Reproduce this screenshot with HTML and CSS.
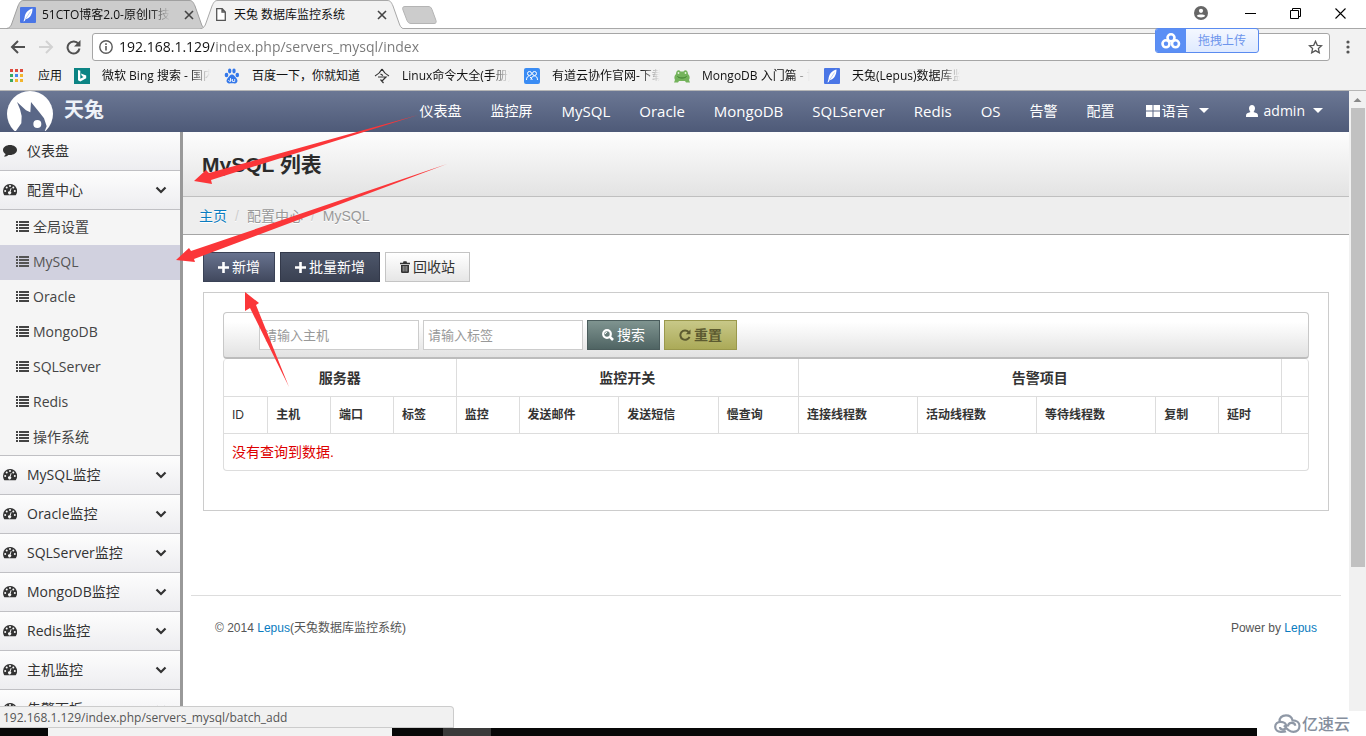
FILE: index.html
```html
<!DOCTYPE html>
<html lang="zh-CN">
<head>
<meta charset="utf-8">
<title>天兔 数据库监控系统</title>
<link rel="stylesheet" href="styles.css">
</head>
<body>
<svg class="sprite" aria-hidden="true">
  <symbol id="i-feather" viewBox="0 0 16 16"><rect width="16" height="16" rx="1" fill="#4a76e6"/><path d="M12.500 1.500C8 2.500 5 6 4.500 11L3.500 14.500l1.200-.6.800-1.700C10 11.500 12.500 7 12.500 1.500z" fill="#fff"/><path d="M10.500 4.500L5.500 12" stroke="#9db7f4" stroke-width=".7"/></symbol>
  <symbol id="i-x" viewBox="0 0 10 10"><path d="M1 1l8 8M9 1L1 9" stroke="currentColor" stroke-width="1.600" fill="none"/></symbol>
  <symbol id="i-list" viewBox="0 0 13 11"><path d="M0 1h2M0 4h2M0 7h2M0 10h2M3 1h10M3 4h10M3 7h10M3 10h10" stroke="currentColor" stroke-width="2" fill="none"/></symbol>
  <symbol id="i-dash" viewBox="0 0 14 12"><path d="M7 0a7 7 0 0 0-7 7c0 1.500.4 2.800 1.100 3.900.2.300.4.400.7.400h10.400c.3 0 .5-.1.700-.4A7 7 0 0 0 7 0z" fill="currentColor"/><g fill="#fafafa"><circle cx="2.200" cy="7" r="1"/><circle cx="3.700" cy="3.600" r="1"/><circle cx="7" cy="2.100" r="1"/><circle cx="10.300" cy="3.600" r="1"/><circle cx="11.800" cy="7" r="1"/><path d="M8.600 4.200L7.600 7.500a1.600 1.600 0 1 1-1-.3l1.200-3.300z"/></g></symbol>
  <symbol id="i-chev" viewBox="0 0 12 8"><path d="M1.500 1.500L6 6l4.500-4.500" stroke="currentColor" stroke-width="2.200" fill="none"/></symbol>
  <symbol id="i-comment" viewBox="0 0 14 12"><path d="M7 0C3.100 0 0 2.200 0 5c0 1.600 1 3 2.600 3.900-.2.800-.7 1.600-1.500 2.200-.2.200-.1.500.2.500 1.600-.1 3-.8 4-1.700.5.100 1.100.1 1.700.1 3.900 0 7-2.200 7-5S10.900 0 7 0z" fill="currentColor"/></symbol>
  <symbol id="i-plus" viewBox="0 0 11 11"><path d="M4.200 0h2.600v4.200H11v2.600H6.800V11H4.200V6.800H0V4.200h4.200z" fill="currentColor"/></symbol>
  <symbol id="i-trash" viewBox="0 0 10 12"><path d="M0 1.700h3L3.500.3h3L7 1.700h3v1.600H0z M1 4h8v6.500c0 .8-.5 1.500-1.200 1.500H2.200C1.500 12 1 11.300 1 10.500z" fill="currentColor"/><path d="M3.200 5v5.500M5 5v5.500M6.800 5v5.500" stroke="#f3f3f3" stroke-width=".6"/></symbol>
  <symbol id="i-search" viewBox="0 0 12 12"><circle cx="5" cy="5" r="3.800" stroke="currentColor" stroke-width="2.200" fill="none"/><path d="M7.700 7.700L11 11" stroke="currentColor" stroke-width="2.600"/><path d="M5 3.200A1.800 1.800 0 0 0 3.300 5" stroke="currentColor" fill="none"/></symbol>
  <symbol id="i-refresh" viewBox="0 0 12 12"><path d="M9.600 3A4.700 4.700 0 1 0 10.500 7.800" stroke="currentColor" stroke-width="2" fill="none"/><path d="M11.500.5v4.700H6.800z" fill="currentColor"/></symbol>
  <symbol id="i-win" viewBox="0 0 14 12"><path d="M0 0h6.500v5.500H0zM7.500 0H14v5.500H7.500zM0 6.500h6.500V12H0zM7.500 6.500H14V12H7.500z" fill="currentColor"/></symbol>
  <symbol id="i-user" viewBox="0 0 12 12"><path d="M6 0C4.200 0 3 1.300 3 3.300 3 5 4 6.500 4.500 7L1.200 8.200C.4 8.600 0 9.300 0 12h12c0-2.700-.4-3.400-1.200-3.800L7.500 7C8 6.500 9 5 9 3.300 9 1.300 7.800 0 6 0z" fill="currentColor"/></symbol>
</svg>

<div class="window">
  <header class="chrome">
    <div class="tabstrip">
      <div class="tab tab-back">
        <svg class="tab-shape" viewBox="0 0 200 29" preserveAspectRatio="none"><path d="M.5 28.500C4 28 5 26 6 23L12 6C14 1.500 15 .5 18 .5h165c3 0 4 1 6 5.500l6 17c1 3 2 5 4.500 5.500" fill="#ccc" stroke="#a0a0a0"/></svg>
        <svg class="ic16"><use href="#i-feather"/></svg>
        <span class="tab-title fade">51CTO博客2.0-原创IT技术</span>
        <button class="bare" aria-label="关闭标签页"><svg class="ic10"><use href="#i-x"/></svg></button>
      </div>
      <div class="tab tab-front">
        <svg class="tab-shape" viewBox="0 0 204 29" preserveAspectRatio="none"><path d="M0 29C4 28 5 26 6 23L12 6C14 1.500 15 .5 18 .5h169c3 0 4 1 6 5.500l6 17c1 3 2 5 5 6" fill="#f2f2f2" stroke="#a8a8a8"/></svg>
        <svg class="ic-page" viewBox="0 0 10 13"><path d="M.7.700h5.500l3.100 3.200v8.400H.7z M6 .7V4h3.300" fill="#fff" stroke="#555" stroke-width="1.300"/></svg>
        <span class="tab-title">天兔 数据库监控系统</span>
        <button class="bare" aria-label="关闭标签页"><svg class="ic10"><use href="#i-x"/></svg></button>
      </div>
      <button class="bare newtab" aria-label="新标签页"><svg viewBox="0 0 36 18" width="36" height="18"><path d="M4 .5h23c2 0 3 .5 4 3l4 11c.5 2 0 3-2 3H10c-2 0-3-1-4-3L2 4C1 1.500 2 .5 4 .5z" fill="#ccc" stroke="#b4b4b4"/></svg></button>
      <div class="wincontrols">
        <button class="bare account" aria-label="用户"><svg width="14" height="14" viewBox="0 0 14 14"><circle cx="7" cy="7" r="7" fill="#666"/><circle cx="7" cy="4.800" r="2.100" fill="#fff"/><path d="M2.800 9.800C4 8 10 8 11.200 9.800 10 12 4 12 2.800 9.800z" fill="#fff"/></svg></button>
        <button class="bare" aria-label="最小化"><svg width="11" height="11"><path d="M0 5.500h11" stroke="#000"/></svg></button>
        <button class="bare" aria-label="还原"><svg width="11" height="11"><path d="M.5 2.500h8v8h-8zM2.500 2.500v-2h8v8h-2" fill="none" stroke="#000"/></svg></button>
        <button class="bare" aria-label="关闭"><svg width="11" height="11"><path d="M.5.500l10 10M10.500.5l-10 10" stroke="#000" stroke-width="1.100"/></svg></button>
      </div>
    </div>
    <div class="toolbar">
      <button class="bare" aria-label="后退"><svg width="16" height="14" viewBox="0 0 16 14"><path d="M15 7H2M8 1L2 7l6 6" fill="none" stroke="#505050" stroke-width="2"/></svg></button>
      <button class="bare" aria-label="前进"><svg width="16" height="14" viewBox="0 0 16 14"><path d="M1 7h13M8 1l6 6-6 6" fill="none" stroke="#d2d2d2" stroke-width="2"/></svg></button>
      <button class="bare" aria-label="刷新"><svg width="15" height="15" viewBox="0 0 15 15"><path d="M12.500 4A6 6 0 1 0 13.500 8.500" fill="none" stroke="#505050" stroke-width="2"/><path d="M14.500 0v6.500H8z" fill="#505050"/></svg></button>
      <div class="omnibox">
        <svg width="14" height="14" viewBox="0 0 14 14"><circle cx="7" cy="7" r="6.200" fill="none" stroke="#5a5a5a" stroke-width="1.400"/><path d="M7 6v4.500M7 3.300v1.600" stroke="#5a5a5a" stroke-width="1.600"/></svg>
        <input class="url" type="text" aria-label="地址" value="192.168.1.129/index.php/servers_mysql/index">
        <button class="bare" aria-label="收藏"><svg width="15" height="14" viewBox="0 0 15 14"><path d="M7.500 1.300l1.800 4 4.300.4-3.200 2.900.9 4.200-3.800-2.200-3.800 2.200.9-4.200L1.400 5.700l4.300-.4z" fill="none" stroke="#555" stroke-width="1.300"/></svg></button>
      </div>
      <button class="bare menu-dots" aria-label="菜单"><svg width="4" height="14" fill="#555"><circle cx="2" cy="2" r="1.600"/><circle cx="2" cy="7" r="1.600"/><circle cx="2" cy="12" r="1.600"/></svg></button>
    </div>
    <nav class="bookmarks" aria-label="书签栏">
      <a class="apps" href="#"><svg width="14" height="14"><g fill="#dd4b3e"><path d="M0 0h3v3H0zM5 0h3v3H5zM10 0h3v3h-3z"/></g><path d="M0 5h3v3H0z" fill="#38a862"/><path d="M5 5h3v3H5z" fill="#4586f0"/><path d="M10 5h3v3h-3zM5 10h3v3H5zM10 10h3v3h-3z" fill="#f2b52c"/><path d="M0 10h3v3H0z" fill="#38a862"/></svg>应用</a>
      <a class="mark" href="#"><svg class="ic16" viewBox="0 0 16 16"><path d="M0 0h16v16H0z" fill="#0c8484"/><path d="M4 2l2.300.8v7.900l3.200-1.800-1.600-.8-1-2.500 5.300 1.900v2.700L6.300 13.600 4 12.300z" fill="#fff"/></svg><span class="fade">微软 Bing 搜索 - 国内版</span></a>
      <a class="mark" href="#"><svg class="ic16" viewBox="0 0 16 16" fill="#3478ea"><ellipse cx="2.500" cy="7" rx="1.800" ry="2.300"/><ellipse cx="5.700" cy="3" rx="1.700" ry="2.400"/><ellipse cx="10" cy="3" rx="1.700" ry="2.400"/><ellipse cx="13.300" cy="7" rx="1.800" ry="2.300"/><path d="M8 6.500c2 0 2.800 2 4 3.200 1.500 1.500 2 3.300.8 4.800-1.300 1.500-3 .8-4.800.8s-3.500.7-4.800-.8c-1.200-1.500-.7-3.300.8-4.800C5.200 8.500 6 6.500 8 6.500z"/><path d="M6.500 10v3.500M4.700 12a1.200 1.200 0 1 0 1.800-.8M8.500 11v2.500h2.200V11" fill="none" stroke="#fff" stroke-width=".8"/></svg><span>百度一下，你就知道</span></a>
      <a class="mark" href="#"><svg class="ic16" viewBox="0 0 16 16" fill="none" stroke="#333" stroke-width="1.200"><path d="M8 1C6.500 4 4 6.500 1 8M8 1c1.500 3 4 5.500 7 7M6.500 6l2.500 1.500M4 9h8l-4 4M6.500 11.500l3 3.500"/></svg><span class="fade">Linux命令大全(手册)</span></a>
      <a class="mark" href="#"><svg class="ic16" viewBox="0 0 16 16"><rect width="16" height="16" rx="2" fill="#3a8cf4"/><g fill="none" stroke="#fff"><circle cx="5.500" cy="5.500" r="2"/><circle cx="10.500" cy="5.500" r="2"/><path d="M2.500 12c0-3 1.500-4 3-4M7 12c0-3 2-4 3.500-4s3 1 3 4M6 9l2.500 2.500"/></g></svg><span class="fade">有道云协作官网-下载安装</span></a>
      <a class="mark" href="#"><svg class="ic16" viewBox="0 0 16 16"><path d="M2 6C2 2 5 1 6.500 3.500h3C11 1 14 2 14 6c2 2 2 4 1 6l1 2.500h-4l-1-1.500H5l-1 1.500H0L1 12C0 10 0 8 2 6z" fill="#74b35c"/><path d="M3.500 8.500c2 2 7 2 9 0" fill="none" stroke="#3b7d2d"/><circle cx="4.500" cy="5" r=".9" fill="#e8f6df"/><circle cx="11.500" cy="5" r=".9" fill="#e8f6df"/></svg><span class="fade">MongoDB 入门篇 - 博客</span></a>
      <a class="mark" href="#"><svg class="ic16"><use href="#i-feather"/></svg><span class="fade">天兔(Lepus)数据库监控</span></a>
    </nav>
    <button class="upload"><span class="upload-logo"><svg width="20" height="16" viewBox="0 0 20 16" fill="none" stroke="#fff" stroke-width="2.600"><circle cx="10" cy="4.800" r="3.500"/><circle cx="5" cy="10.800" r="3.500"/><circle cx="14.500" cy="10.800" r="3.500"/></svg></span><span class="upload-text">拖拽上传</span></button>
  </header>

  <div class="viewport">
    <div class="site">
      <div class="navbar">
        <a class="brand" href="#"><svg width="46" height="40" viewBox="20 9 138 120"><circle cx="89" cy="78" r="69" fill="#fff"/><path d="M50 42l27 25 13 6 2-31 25 31 14 18 8 24-6 15H46l17-24 1-22-5-20z" fill="#5a6787"/><circle cx="111" cy="108" r="12" fill="#fff"/></svg><span>天兔</span></a>
        <nav class="topnav" aria-label="主导航">
          <a href="#">仪表盘</a><a href="#">监控屏</a><a class="latin" href="#">MySQL</a><a class="latin" href="#">Oracle</a><a class="latin" href="#">MongoDB</a><a class="latin" href="#">SQLServer</a><a class="latin" href="#">Redis</a><a class="latin" href="#">OS</a><a href="#">告警</a><a href="#">配置</a>
          <a class="drop" href="#"><svg width="14" height="12"><use href="#i-win"/></svg>语言<i class="caret"></i></a>
          <a class="drop user" href="#"><svg width="12" height="12"><use href="#i-user"/></svg>admin<i class="caret"></i></a>
        </nav>
      </div>
      <div class="body">
        <nav class="sidebar" aria-label="侧栏">
          <a class="group" href="#"><svg class="ic14"><use href="#i-comment"/></svg><span>仪表盘</span></a>
          <a class="group" href="#"><svg class="ic14"><use href="#i-dash"/></svg><span>配置中心</span><svg class="chev"><use href="#i-chev"/></svg></a>
          <div class="sub">
            <a href="#"><svg class="ic13"><use href="#i-list"/></svg>全局设置</a>
            <a class="current" href="#"><svg class="ic13"><use href="#i-list"/></svg>MySQL</a>
            <a href="#"><svg class="ic13"><use href="#i-list"/></svg>Oracle</a>
            <a href="#"><svg class="ic13"><use href="#i-list"/></svg>MongoDB</a>
            <a href="#"><svg class="ic13"><use href="#i-list"/></svg>SQLServer</a>
            <a href="#"><svg class="ic13"><use href="#i-list"/></svg>Redis</a>
            <a href="#"><svg class="ic13"><use href="#i-list"/></svg>操作系统</a>
          </div>
          <a class="group" href="#"><svg class="ic14"><use href="#i-dash"/></svg><span>MySQL监控</span><svg class="chev"><use href="#i-chev"/></svg></a>
          <a class="group" href="#"><svg class="ic14"><use href="#i-dash"/></svg><span>Oracle监控</span><svg class="chev"><use href="#i-chev"/></svg></a>
          <a class="group" href="#"><svg class="ic14"><use href="#i-dash"/></svg><span>SQLServer监控</span><svg class="chev"><use href="#i-chev"/></svg></a>
          <a class="group" href="#"><svg class="ic14"><use href="#i-dash"/></svg><span>MongoDB监控</span><svg class="chev"><use href="#i-chev"/></svg></a>
          <a class="group" href="#"><svg class="ic14"><use href="#i-dash"/></svg><span>Redis监控</span><svg class="chev"><use href="#i-chev"/></svg></a>
          <a class="group" href="#"><svg class="ic14"><use href="#i-dash"/></svg><span>主机监控</span><svg class="chev"><use href="#i-chev"/></svg></a>
          <a class="group" href="#"><svg class="ic14"><use href="#i-dash"/></svg><span>告警面板</span><svg class="chev"><use href="#i-chev"/></svg></a>
        </nav>
        <main class="main">
          <div class="pagehead"><h1>MySQL 列表</h1></div>
          <nav class="crumbs" aria-label="面包屑"><a href="#">主页</a><i>/</i><span>配置中心</span><i>/</i><span>MySQL</span></nav>
          <div class="content">
            <div class="actions">
              <button class="btn btn-navy"><svg width="11" height="11"><use href="#i-plus"/></svg>新增</button>
              <button class="btn btn-dark"><svg width="11" height="11"><use href="#i-plus"/></svg>批量新增</button>
              <button class="btn btn-light"><svg width="10" height="12"><use href="#i-trash"/></svg>回收站</button>
            </div>
            <section class="well">
              <form class="filter">
                <input type="text" aria-label="主机" placeholder="请输入主机">
                <input type="text" aria-label="标签" placeholder="请输入标签">
                <button type="button" class="btn btn-teal"><svg width="12" height="12"><use href="#i-search"/></svg>搜索</button>
                <button type="button" class="btn btn-olive"><svg width="12" height="12"><use href="#i-refresh"/></svg>重置</button>
              </form>
              <table class="grid">
                <colgroup><col class="w-id"><col class="w-s"><col class="w-s"><col class="w-s"><col class="w-s"><col class="w-m"><col class="w-m"><col class="w-q"><col class="w-l"><col class="w-l"><col class="w-l"><col class="w-s"><col class="w-s"><col class="w-e"></colgroup>
                <thead>
                  <tr class="heads"><th colspan="4">服务器</th><th colspan="4">监控开关</th><th colspan="5">告警项目</th><th></th></tr>
                  <tr class="cols"><th>ID</th><th>主机</th><th>端口</th><th>标签</th><th>监控</th><th>发送邮件</th><th>发送短信</th><th>慢查询</th><th>连接线程数</th><th>活动线程数</th><th>等待线程数</th><th>复制</th><th>延时</th><th></th></tr>
                </thead>
                <tbody><tr><td colspan="14">没有查询到数据.</td></tr></tbody>
              </table>
            </section>
          </div>
          <footer class="foot"><p>© 2014 <a href="#">Lepus</a>(天兔数据库监控系统)</p><p>Power by <a href="#">Lepus</a></p></footer>
        </main>
      </div>
    </div>
    <div class="scroll"><div class="track"><svg width="17" height="17"><path d="M4.500 11L8.500 7l4 4z" fill="#888"/></svg><div class="thumb"></div></div></div>
    <div class="status">192.168.1.129/index.php/servers_mysql/batch_add</div>
  </div>
  <div class="taskbar"><span class="t-start"></span><span class="t-search"></span><span class="t-gap"></span><span class="t-active"></span><span class="t-rest"></span><span class="t-end"></span></div>
  <svg class="arrows" width="460" height="400" fill="#fb3639" aria-hidden="true">
    <path d="M194 181l12-11 3 3 209-58-207 65 1 4z"/>
    <path d="M176 260l13-12 2 3 256-87-253 95 1 3z"/>
    <path d="M245 292l14 11-3 2 33 82-39-79-5 3z"/>
  </svg>
  <div class="watermark"><svg width="27" height="19" viewBox="0 0 27 19" fill="none" stroke="#8f98a6" stroke-width="2.200"><path d="M5.500 8C5 4 8 1.300 12 1.300c3.300 0 5.800 1.700 6.500 5 4 0 7 2.200 7 5.500 0 3.500-2.500 6-6 6-4 0-7-3-9.500-6.500M12 17.300c-1 .5-3 .5-5 .5-3.500 0-5.800-2-5.800-5 0-3.300 2.500-5 5.500-5 3.500 0 5.500 2 5.500 4.500 0 2-1.500 3.200-3.200 3.200S6 14.500 6 13M14 12.500c0-2.500 1.700-3.700 3.700-3.700 2.200 0 3.500 1.200 3.500 3"/></svg>亿速云</div>
</div>
</body>
</html>
```

FILE: styles.css
```css
* { box-sizing: border-box; }
body {
  margin: 0;
  font-family: "Open Sans", "Noto Sans CJK SC", sans-serif;
  font-size: 14px;
  line-height: 20px;
  color: #333;
  background: #fff;
}
a { color: inherit; text-decoration: none; }
h1, p { margin: 0; }
i { font-style: normal; }
svg { flex: none; display: block; }
.sprite { position: absolute; width: 0; height: 0; }
.bare { border: 0; padding: 0; background: none; display: flex; align-items: center; color: inherit; }
.ic16 { width: 16px; height: 16px; }
.ic14 { width: 14px; height: 12px; }
.ic13 { width: 13px; height: 11px; }
.ic10 { width: 10px; height: 10px; }

.window { position: relative; display: flex; flex-direction: column; height: 100vh; overflow: hidden; }

/* browser frame */
.chrome { position: relative; flex: none; background: #f2f2f2; border-bottom: 1px solid #b6b6b6; font-size: 12px; color: #111; }
.tabstrip { display: flex; align-items: stretch; height: 29px; padding-left: 6px; background: linear-gradient(#fff 28px, #a8a8a8 28px); }
.tab { position: relative; display: flex; align-items: center; padding: 0 12px 0 14px; width: 200px; color: #444; }
.tab > * { position: relative; }
.tab > .tab-shape { position: absolute; left: 0; top: 0; width: 100%; height: 29px; }
.tab-front { width: 204px; margin-left: -6px; padding-left: 16px; padding-right: 17px; }
.ic-page { width: 10px; height: 13px; }
.tab-title { flex: 1; margin: 0 14px 0 6px; color: #111; white-space: nowrap; overflow: hidden; }
.tab-front .tab-title { margin-left: 8px; }
.fade { -webkit-mask-image: linear-gradient(to left, transparent, #000 20px); mask-image: linear-gradient(to left, transparent, #000 20px); }
.newtab { margin: 0 0 0 -3px; }
.wincontrols { display: flex; align-items: center; gap: 34px; margin-left: auto; padding-right: 20px; padding-bottom: 3px; }
.account { margin-right: 3px; }
.toolbar { display: flex; align-items: center; padding: 4px 16px 0 10px; gap: 12px; }
.omnibox { flex: 1; display: flex; align-items: center; gap: 6px; height: 28px; padding: 0 6px; border: 1px solid #a6a6a6; border-radius: 3px; background: #fff; }
.url {
  flex: 1; min-width: 0; border: 0; padding: 0 0 2px; outline: 0; height: 24px;
  font: inherit; font-size: 14px; color: transparent;
  background: linear-gradient(to right, #111 95px, #777 95px);
  -webkit-background-clip: text; background-clip: text;
}
.menu-dots { margin: 0 0 0 4px; }
.toolbar > .bare + .omnibox { margin-left: -1px; }
.bookmarks { display: flex; align-items: center; height: 29px; padding: 1px 0 0 10px; }
.apps { display: flex; align-items: center; gap: 14px; width: 64px; }
.mark { display: flex; align-items: center; gap: 12px; width: 150px; padding-right: 14px; }
.mark span { flex: 1; min-width: 0; white-space: nowrap; overflow: hidden; }
.upload { position: absolute; right: 107px; top: 28px; display: flex; width: 104px; height: 25px; padding: 0; border: 1px solid #5a8bf0; border-radius: 3px; background: linear-gradient(#f4f8ff, #dfeaff); overflow: hidden; font: inherit; color: #6d95ec; }
.upload-logo { display: flex; align-items: center; justify-content: center; width: 30px; height: 100%; background: #5b8ff5; }
.upload-text { flex: 1; line-height: 23px; }

/* site */
.viewport { position: relative; flex: 1; min-height: 0; display: flex; overflow: hidden; }
.site { flex: 1; min-width: 0; display: flex; flex-direction: column; overflow: hidden; }
.navbar { flex: none; display: flex; justify-content: space-between; height: 41px; padding: 0 26px 2px 7px; background: linear-gradient(#6b7794, #4e5a78); color: #fff; }
.brand { display: flex; align-items: flex-start; gap: 11px; font-family: "Liberation Serif", "Noto Sans CJK SC", serif; font-size: 20px; font-weight: 700; line-height: 39px; }
.brand span { color: #eef2f8; }
.topnav { display: flex; align-items: center; gap: 29px; white-space: nowrap; }
.topnav .latin { font-size: 15px; }
.topnav .drop { display: flex; align-items: center; gap: 2px; margin-left: 2px; }
.topnav .user { gap: 6px; margin-left: 8px; }
.caret { margin-left: 7px; border: 5px solid transparent; border-top-color: #fff; border-bottom: 0; }
.user .caret { margin-left: 2px; }
.body { flex: 1; min-height: 0; display: flex; }
.sidebar { flex: none; width: 183px; border-right: 3px solid #999; background: #f5f5f5; overflow: hidden; }
.group { display: flex; align-items: center; height: 39px; padding: 0 13px 0 3px; gap: 10px; border-bottom: 1px solid #c0c0c4; background: linear-gradient(#fdfdfd, #ededf0); }
.group span { flex: 1; }
.chev { width: 12px; height: 8px; }
.sub { border-bottom: 1px solid #c0c0c4; }
.sub a { display: flex; align-items: center; gap: 4px; height: 35px; padding: 0 0 2px 16px; color: #444; }
.sub .current { background: #d1d1df; color: #555; }
.main { flex: 1; min-width: 0; font-family: "Liberation Sans", "Noto Sans CJK SC", sans-serif; }
.pagehead { height: 65px; padding: 19px 19px 17px; border-bottom: 1px solid #bfbfbf; background: linear-gradient(#fdfdfd, #e3e3e3); }
.pagehead h1 { font-size: 21px; line-height: 28px; color: #2b2b2b; }
.crumbs { display: flex; align-items: center; height: 38px; padding: 0 16px; border-bottom: 1px solid #a5a5a5; background: #eee; color: #999; text-shadow: 0 1px 0 #fff; }
.crumbs a { color: #0a7cc0; }
.crumbs i { padding: 0 8px; color: #ccc; }
.content { padding: 17px 20px 0; }
.actions { display: flex; gap: 5px; margin-bottom: 10px; }
.btn { display: flex; align-items: center; gap: 3px; height: 30px; padding: 0 14px; border: 1px solid; font: inherit; font-size: 14px; }
.btn-navy { color: #fff; border-color: #3a4256; background: linear-gradient(#68738f, #41495e); }
.btn-dark { color: #fff; border-color: #33394a; background: linear-gradient(#4d566a, #3a4152); }
.btn-light { color: #333; border-color: #c4c4c4; background: linear-gradient(#fff, #e6e6e6); }
.btn-teal { color: #fff; border-color: #4a5c5c; background: linear-gradient(#7f9490, #4f6463); }
.btn-olive { color: #5d5b30; border-color: #9a984c; background: linear-gradient(#c8c888, #abaa58); font-weight: 700; }
.well { padding: 19px 19px 39px; border: 1px solid #ccc; }
.filter { display: flex; align-items: center; gap: 4px; height: 47px; padding: 0 0 0 35px; border: 1px solid #c8c8c8; border-bottom: 2px solid #bcbcbc; border-radius: 4px; background: linear-gradient(#fff 20%, #e2e2e2); }
.filter input { width: 160px; height: 30px; padding: 0 4px; border: 1px solid #ccc; background: #fff; font: inherit; font-size: 13px; }
.filter input::placeholder { color: #999; }
.grid { width: 100%; table-layout: fixed; border-collapse: separate; border-spacing: 0; border: 1px solid #ddd; border-top-width: 0; border-radius: 4px; }
.grid th, .grid td { height: 37px; padding: 0 8px; border-left: 1px solid #ddd; text-align: left; white-space: nowrap; }
.grid th:first-child, .grid td:first-child { border-left: 0; }
.grid .cols th { border-top: 1px solid #ddd; font-size: 12px; }
.grid .cols th:first-child { font-weight: 400; }
.grid .heads th { text-align: center; }
.grid td { border-top: 1px solid #ddd; color: #d00; }
.w-id { width: 4%; }
.w-s { width: 5.800%; }
.w-m { width: 9.200%; }
.w-q { width: 7.400%; }
.w-l { width: 11%; }
.w-e { width: 2.500%; }
.foot { display: flex; justify-content: space-between; margin: 84px 8px 0; padding: 22px 24px; border-top: 1px solid #ddd; font-size: 12px; color: #555; }
.foot a { color: #0a7cc0; }

.scroll { flex: none; width: 17px; background: #fff; padding-bottom: 17px; }
.track { height: 100%; background: #f1f1f1; }
.thumb { height: 74%; margin: 0 1px 0 2px; background: #c1c1c1; }
.status { position: absolute; left: 0; bottom: 0; width: 454px; height: 22px; padding: 1px 0 0 3px; border: 1px solid #ccc; border-left: 0; border-radius: 0 4px 0 0; background: #f1f1f1; font-size: 12px; color: #555; }
.taskbar { flex: none; display: flex; height: 8px; background: #080808; }
.t-start { width: 48px; }
.t-search { width: 344px; background: #f2f2f2; }
.t-gap { width: 51px; }
.t-active { width: 48px; background: #3a3a3a; }
.t-rest { flex: 1; }
.t-end { width: 109px; background: #fff; }
.arrows { position: absolute; left: 0; top: 0; pointer-events: none; }
.watermark { position: absolute; right: 16px; bottom: 3px; display: flex; align-items: center; gap: 1px; font-family: "Noto Sans CJK SC", sans-serif; font-size: 16px; font-weight: 500; color: #858e9d; }
```
